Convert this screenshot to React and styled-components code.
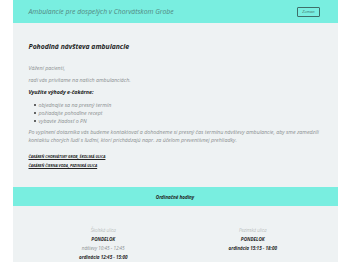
import React from "react";
import styled, { createGlobalStyle } from "styled-components";

const GlobalStyle = createGlobalStyle`
  html, body {
    margin: 0;
    padding: 0;
    background: #fff;
    font-family: "Open Sans", "Liberation Sans", sans-serif;
  }
`;

const Page = styled.div`
  width: 325px;
  margin: 0 auto;
  min-height: 262px;
  background: #eef2f3;
`;

const TopBar = styled.header`
  height: 23px;
  padding: 0 18px 0 16px;
  display: flex;
  align-items: center;
  justify-content: space-between;
  background: #79eee0;
`;

const SiteTitle = styled.span`
  font-size: 6.8px;
  font-style: italic;
  font-weight: 400;
  color: #52867f;
`;

const MenuButton = styled.button`
  height: 10px;
  padding: 0 4px;
  font-family: inherit;
  font-size: 4px;
  font-style: italic;
  color: #3e6f6a;
  background: transparent;
  border: 1px solid #3e6f6a;
  border-radius: 1px;
`;

const Content = styled.section`
  padding: 19px 10px 0 16px;
`;

const Heading = styled.h1`
  margin: 0 0 14px;
  font-size: 6.8px;
  font-style: italic;
  font-weight: 700;
  color: #1e1e1e;
`;

const Text = styled.p`
  margin: 0 0 4.5px;
  font-size: 5.3px;
  line-height: 7.5px;
  font-style: italic;
  font-weight: ${p => (p.$strong ? 700 : 400)};
  color: ${p => (p.$strong ? "#222" : "#8a8f90")};
`;

const List = styled.ul`
  margin: 0 0 4px;
  padding: 0 0 0 10px;
  list-style: none;
`;

const Item = styled.li`
  position: relative;
  font-size: 5.3px;
  line-height: 8px;
  font-style: italic;
  color: #8a8f90;

  &::before {
    content: "";
    position: absolute;
    left: -5px;
    top: 3px;
    width: 2px;
    height: 2px;
    border-radius: 50%;
    background: #333;
  }
`;

const Links = styled.div`
  margin-top: 10px;
  display: flex;
  flex-direction: column;
  gap: 3px;
`;

const Link = styled.a`
  font-size: 3.6px;
  line-height: 6px;
  font-style: italic;
  font-weight: 700;
  text-transform: uppercase;
  color: #222;
  text-decoration: underline;
`;

const HoursBand = styled.div`
  margin-top: 18px;
  height: 19px;
  display: flex;
  align-items: center;
  justify-content: center;
  background: #79eee0;
  font-size: 4.6px;
  font-style: italic;
  font-weight: 700;
  color: #1e1e1e;
`;

const Columns = styled.div`
  padding: 20px 10px 0 16px;
  display: grid;
  grid-template-columns: 1fr 1fr;
`;

const Column = styled.div`
  display: flex;
  flex-direction: column;
  align-items: center;
  font-size: 4.6px;
  line-height: 9px;
  font-style: italic;
`;

const Place = styled.span`
  font-weight: 300;
  color: #9a9fa0;
`;

const Day = styled.span`
  font-weight: 700;
  color: #2a2a2a;
  text-transform: uppercase;
`;

const Slot = styled.span`
  font-weight: ${p => (p.$bold ? 700 : 400)};
  color: ${p => (p.$bold ? "#2a2a2a" : "#8a8f90")};
`;

const places = [
  {
    name: "Školská ulica",
    slots: [
      { label: "náštevy 10:45 - 12:45" },
      { label: "ordinácia 12:45 - 15:00", bold: true },
    ],
  },
  {
    name: "Pezinská ulica",
    slots: [{ label: "ordinácia 15:15 - 18:00", bold: true }],
  },
];

const App = () => {
  return (
    <>
      <GlobalStyle />
      <Page>
        <TopBar>
          <SiteTitle>Ambulancie pre dospelých v Chorvátskom Grobe</SiteTitle>
          <MenuButton>Zemon</MenuButton>
        </TopBar>
        <Content>
          <Heading>Pohodlná návšteva ambulancie</Heading>
          <Text>Vážení pacienti,</Text>
          <Text>radi vás privítame na našich ambulanciách.</Text>
          <Text $strong>Využite výhody e-čakárne:</Text>
          <List>
            <Item>objednajte sa na presný termín</Item>
            <Item>požiadajte pohodlne recept</Item>
            <Item>vybavte žiadosť o PN</Item>
          </List>
          <Text>
            Po vyplnení dotazníka vás budeme kontaktovať a dohodneme si presný
            čas termínu návštevy ambulancie, aby sme zamedzili kontaktu chorých
            ľudí s ľuďmi, ktorí prichádzajú napr. za účelom preventívnej
            prehliadky.
          </Text>
          <Links>
            <Link href="#">Čakáreň Chorvátsky Grob, Školská ulica</Link>
            <Link href="#">Čakáreň Čierna Voda, Pezinská ulica</Link>
          </Links>
        </Content>
        <HoursBand>Ordinačné hodiny</HoursBand>
        <Columns>
          {places.map(place => (
            <Column key={place.name}>
              <Place>{place.name}</Place>
              <Day>Pondelok</Day>
              {place.slots.map(slot => (
                <Slot key={slot.label} $bold={slot.bold}>
                  {slot.label}
                </Slot>
              ))}
            </Column>
          ))}
        </Columns>
      </Page>
    </>
  );
};

export default App;
